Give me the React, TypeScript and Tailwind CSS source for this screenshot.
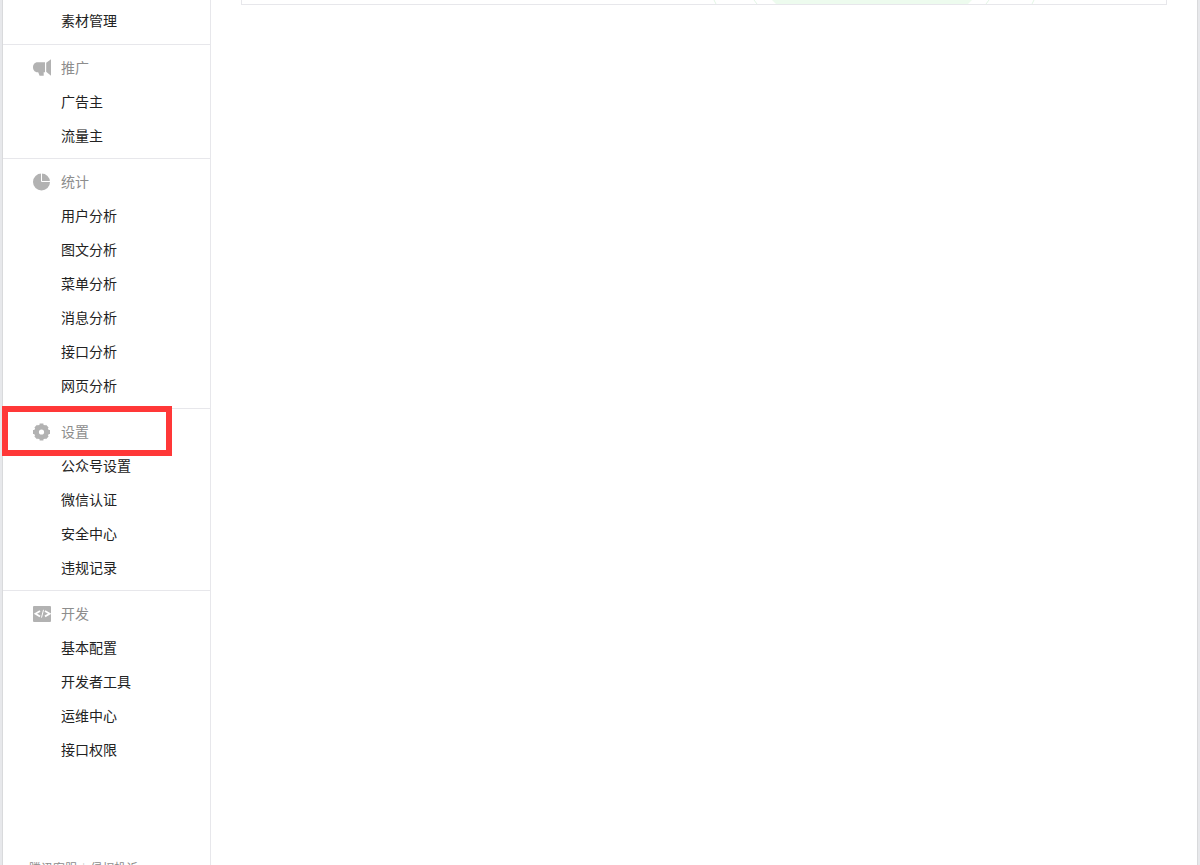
import type { ReactNode } from "react";

type Group = {
  title: string;
  icon: ReactNode;
  items: string[];
  marked?: boolean;
};

function MegaphoneIcon() {
  return (
    <svg viewBox="0 0 18 18" className="mt-0.5 size-[18px] fill-[#b2b2b2]" aria-hidden="true">
      <path d="M4.5 3.2H12v10h-1.3v3.6H6.6l-1.4-3.6h-.7C1.8 13.2 0 11 0 8.2s1.8-5 4.5-5z" />
      <path d="M13.2 3.8 18 .2v16.6l-4.8-4z" />
    </svg>
  );
}

function PieIcon() {
  return (
    <svg viewBox="0 0 18 18" className="mt-0.5 size-[18px]" aria-hidden="true">
      <circle cx="8.5" cy="9" r="8.5" fill="#b2b2b2" />
      <path d="M8.5 0v8.5H17.5" fill="none" stroke="#fff" strokeWidth="1" />
    </svg>
  );
}

function GearIcon() {
  return (
    <svg viewBox="0 0 18 18" className="mt-0.5 size-[18px]" aria-hidden="true">
      <circle cx="8.5" cy="9" r="7.5" fill="#b2b2b2" />
      <path
        d="M8.5 .5v17M0 9h17M2.7 3.2l11.6 11.6M14.3 3.2 2.7 14.8"
        stroke="#b2b2b2"
        strokeWidth="3.8"
      />
      <circle cx="8.5" cy="9" r="2.6" fill="#fff" />
    </svg>
  );
}

function CodeIcon() {
  return (
    <svg viewBox="0 0 18 18" className="mt-0.5 size-[18px]" aria-hidden="true">
      <rect y="1" width="18" height="16" rx="1" fill="#b2b2b2" />
      <path
        d="M7 6 2.5 8.7 7 11.4M12 6l4.7 2.7L12 11.4"
        fill="none"
        stroke="#fff"
        strokeWidth="1.8"
      />
      <path d="M10.5 4.8 8.5 12.6" stroke="#fff" strokeWidth="1" />
    </svg>
  );
}

const groups: Group[] = [
  { title: "推广", icon: <MegaphoneIcon />, items: ["广告主", "流量主"] },
  {
    title: "统计",
    icon: <PieIcon />,
    items: ["用户分析", "图文分析", "菜单分析", "消息分析", "接口分析", "网页分析"],
  },
  {
    title: "设置",
    icon: <GearIcon />,
    items: ["公众号设置", "微信认证", "安全中心", "违规记录"],
    marked: true,
  },
  {
    title: "开发",
    icon: <CodeIcon />,
    items: ["基本配置", "开发者工具", "运维中心", "接口权限"],
  },
];

function MenuLink({ label }: { label: string }) {
  return (
    <li>
      <a href="#" className="block h-[34px] pl-[58px] leading-[34px] text-[#222]">
        {label}
      </a>
    </li>
  );
}

function MenuGroup({ title, icon, items, marked }: Group) {
  return (
    <section className="border-t border-[#e7e7eb] pt-[5px] pb-1.5">
      <h2 className="relative flex h-[34px] items-center gap-2.5 pl-[30px] text-[#8d8d8d]">
        {icon}
        {title}
        {/* Red marker around the entry */}
        {marked && (
          <span className="pointer-events-none absolute -inset-y-2 -left-px w-[170px] border-6 border-[#ff3838]" />
        )}
      </h2>
      <ul>
        {items.map((item) => (
          <MenuLink key={item} label={item} />
        ))}
      </ul>
    </section>
  );
}

export default function App() {
  return (
    <div className="h-screen overflow-hidden bg-[#e7e8eb] px-[2px] font-['Noto_Sans_CJK_SC',sans-serif] text-sm">
      <div className="flex min-h-full border-x border-[#d9dadc] bg-white">
        {/* Sidebar */}
        <aside className="w-[208px] shrink-0 border-r border-[#e7e7eb]">
          <nav>
            <ul className="pt-[3px] pb-[7px]">
              <MenuLink label="素材管理" />
            </ul>
            {groups.map((group) => (
              <MenuGroup key={group.title} {...group} />
            ))}
          </nav>
          <footer className="flex gap-[5px] pt-[88px] pl-[26px] text-xs text-[#8d8d8d]">
            <a href="#">腾讯客服</a>
            <span className="text-[#d0d0d0]">|</span>
            <a href="#">侵权投诉</a>
          </footer>
        </aside>

        {/* Content, only the bottom edge of the panel is in view */}
        <main className="min-w-0 flex-1 px-[30px]">
          <div className="flex h-[5px] justify-end border-x border-b border-[#e7e7eb] pr-[130px]">
            <svg viewBox="0 0 324 4" className="h-1 w-[324px]" aria-hidden="true">
              <path d="M60 0h200l-4 4H64z" fill="#edfbee" />
              <path
                d="M2 0l2 4M42 0l3 4M277 0l-3 4M322 0l-2 4"
                fill="none"
                stroke="#e3f6e5"
              />
            </svg>
          </div>
        </main>
      </div>
    </div>
  );
}
